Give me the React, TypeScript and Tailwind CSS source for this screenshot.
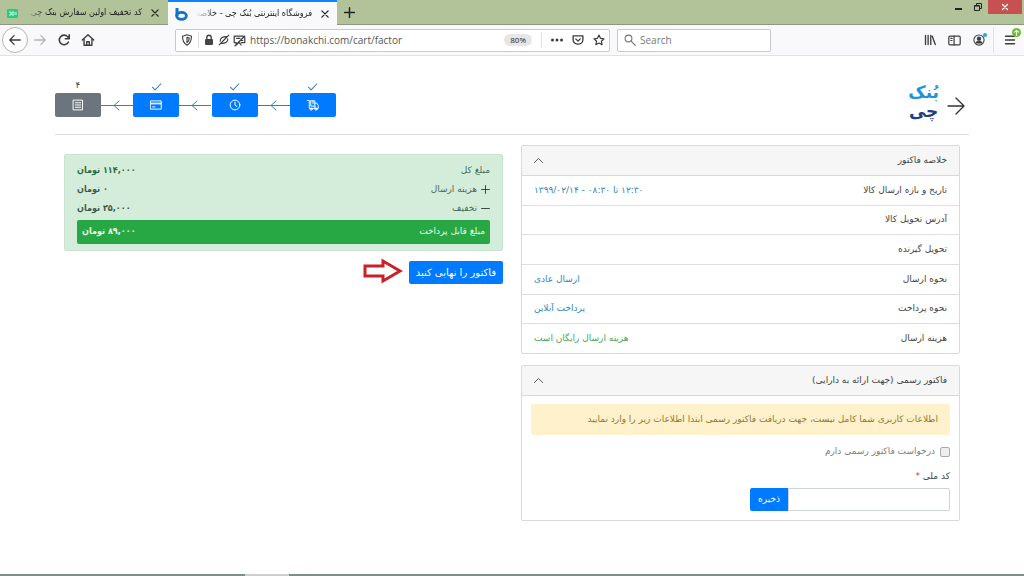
import type { ReactNode } from "react";

const stroke = {
  fill: "none",
  stroke: "currentColor",
  strokeLinecap: "round" as const,
  strokeLinejoin: "round" as const,
};

function Icon({ size, width = 1.5, children, className = "" }: { size: number; width?: number; children: ReactNode; className?: string }) {
  return (
    <svg aria-hidden="true" width={size} height={size} viewBox="0 0 16 16" strokeWidth={width} {...stroke} className={`shrink-0 ${className}`}>
      {children}
    </svg>
  );
}

function CloseGlyph() {
  return (
    <Icon size={10} width={2}>
      <path d="M3 3l10 10M13 3L3 13" />
    </Icon>
  );
}

function TabStrip() {
  return (
    <div className="flex h-[25px] items-stretch border-b border-[#8f9784] bg-[#b3c399] font-['DejaVu_Sans_Condensed','DejaVu_Sans',sans-serif] text-[#222]">
      <div className="flex w-[168px] items-center gap-2 pl-[7px] pr-2 pt-[2px]">
        <svg aria-hidden="true" width="11" height="9" viewBox="0 0 11 9" className="shrink-0">
          <rect width="11" height="9" rx="1" fill="#1fd07c" />
          <path d="M2 3h2v3H2M5 3h2v3H5zM9 3v3" fill="none" stroke="#c8f7df" strokeWidth="1" />
        </svg>
        <span dir="rtl" className="flex-1 whitespace-nowrap text-[9px] [mask-image:linear-gradient(to_right,transparent,black_20px)]">
          کد تخفیف اولین سفارش بنک چی.
        </span>
        <button type="button" aria-label="Close tab" className="flex"><CloseGlyph /></button>
      </div>
      <div className="-mb-px flex w-[169px] items-center gap-2 border-t-2 border-[#0a84ff] bg-[#f9f9fb] pl-[7px] pr-2">
        <svg aria-hidden="true" width="13" height="14" viewBox="0 0 13 14" className="shrink-0">
          <path d="M2 1v8" stroke="#1273c4" strokeWidth="3" fill="none" />
          <ellipse cx="6.5" cy="8.8" rx="4.9" ry="3.5" fill="none" stroke="#1273c4" strokeWidth="2.8" />
        </svg>
        <span dir="rtl" className="flex-1 whitespace-nowrap text-[9px] [mask-image:linear-gradient(to_right,transparent,black_20px)]">
          فروشگاه اینترنتی بُنک چی - خلاصه
        </span>
        <button type="button" aria-label="Close tab" className="flex"><CloseGlyph /></button>
      </div>
      <button type="button" aria-label="New tab" className="ml-[6px] flex items-center">
        <Icon size={13} width={1.8}><path d="M8 2v12M2 8h12" /></Icon>
      </button>
      <div className="ml-auto flex items-start">
        <button type="button" aria-label="Minimize" className="flex h-4 w-5 items-center justify-center">
          <svg aria-hidden="true" width="7" height="8" viewBox="0 0 7 8"><path d="M0 4h7v2H0z" fill="#222" /></svg>
        </button>
        <button type="button" aria-label="Restore" className="flex h-[14px] w-5 items-center justify-center">
          <svg aria-hidden="true" width="8" height="8" viewBox="0 0 8 8" fill="none" stroke="#222">
            <path d="M.5 2.5h5v5h-5zM.5 3h5M2.5 2V.5h5v5H6" />
          </svg>
        </button>
        <button type="button" aria-label="Close window" className="mr-[2px] flex h-[14px] w-[34px] items-center justify-center bg-[#c75050] text-white">
          <Icon size={8} width={2.4}><path d="M3 3l10 10M13 3L3 13" /></Icon>
        </button>
      </div>
    </div>
  );
}

function Toolbar() {
  return (
    <div className="flex h-[31px] items-center border-b border-[#e2e2e4] bg-[#f9f9fb] pl-[2px] pr-2 text-[#3d3d3f]">
      <button type="button" aria-label="Back" className="flex h-[26px] w-[26px] items-center justify-center rounded-full border border-[#b5b5b7] bg-white">
        <Icon size={14}><path d="M14 8H2.500M7 3L2 8l5 5" /></Icon>
      </button>
      <button type="button" aria-label="Forward" className="ml-[5px] flex text-[#b4b4b6]">
        <Icon size={14}><path d="M2 8h11.500M9 3l5 5-5 5" /></Icon>
      </button>
      <button type="button" aria-label="Reload" className="ml-[10px] flex">
        <Icon size={14} width={1.8}><path d="M13 10.500A5.500 5.500 0 1 1 12 4l1.500 1.800M14 2v4.500H9.500" /></Icon>
      </button>
      <button type="button" aria-label="Home" className="ml-[10px] flex">
        <Icon size={14} width={1.6}><path d="M1.500 8L8 2l6.500 6M3.500 7v7h9V7M6.500 14v-4h3v4" /></Icon>
      </button>
      <div className="ml-[80px] flex h-[23px] min-w-0 flex-1 items-center rounded-[2px] border border-[#c9c9cb] bg-white pl-[5px] pr-1">
        <Icon size={12}><path d="M8 1l6 2c0 6-1.500 9.500-6 12C3.500 12.500 2 9 2 3zM8 4.500v7c2-1.500 3-3.500 3-6z" /></Icon>
        <span className="mx-[5px] h-4 w-px bg-[#dcdcde]" />
        <svg aria-hidden="true" width="10" height="12" viewBox="0 0 10 12" className="shrink-0">
          <rect x="1" y="5" width="8" height="6" rx="1" fill="#444" />
          <path d="M2.800 5V3.500a2.200 2.200 0 0 1 4.400 0V5" fill="none" stroke="#444" strokeWidth="1.400" />
        </svg>
        <Icon size={12} className="ml-1"><path d="M1.500 14.500l13-13M3 9.500C2.500 6 6 3 12 3.500M13 6.500c.5 3.500-3 6.500-9 6M6 10l5-5" /></Icon>
        <Icon size={13} className="ml-[3px]"><path d="M1.500 2.500h11M1.500 2.500v8H4v3l3-3M14.500 4.500v6H10M2.500 14.500l12-12M4.500 5.500h4M10 8h2M10 13.500L7.500 10.500" /></Icon>
        <input aria-label="Address" defaultValue="https://bonakchi.com/cart/factor" className="ml-1 h-4 min-w-0 flex-1 bg-transparent font-['Open_Sans',sans-serif] text-[10px] leading-4 text-[#555] outline-none" />
        <span className="rounded-full bg-[#e6e6e8] px-[6px] py-px font-['Open_Sans',sans-serif] text-[8px] leading-[10px] text-[#222]">80%</span>
        <span className="mx-[9px] h-4 w-px bg-[#e3e3e5]" />
        <button type="button" aria-label="Page actions" className="flex">
          <svg aria-hidden="true" width="12" height="4" viewBox="0 0 12 4" fill="#3d3d3f"><circle cx="1.500" cy="2" r="1.500" /><circle cx="6" cy="2" r="1.500" /><circle cx="10.500" cy="2" r="1.500" /></svg>
        </button>
        <button type="button" aria-label="Save to Pocket" className="ml-[9px] flex">
          <Icon size={12} width={1.8}><path d="M1.500 2.500h13v5c0 8-13 8-13 0zM5 6.500l3 3 3-3" /></Icon>
        </button>
        <button type="button" aria-label="Bookmark" className="ml-[9px] flex">
          <Icon size={12} width={1.6}><path d="M8 1.500l2 4.300 4.700.6-3.500 3.200.9 4.700L8 12l-4.100 2.300.9-4.700L1.300 6.400 6 5.800z" /></Icon>
        </button>
      </div>
      <div className="ml-[7px] flex h-[23px] w-[154px] min-w-0 items-center gap-1 rounded-[2px] border border-[#c9c9cb] bg-white px-[6px]">
        <Icon size={12} className="text-[#777]"><circle cx="6" cy="6" r="4.500" /><path d="M9.500 9.500L15 15" /></Icon>
        <input aria-label="Search" placeholder="Search" className="h-4 min-w-0 flex-1 bg-transparent font-['Open_Sans',sans-serif] text-[10px] leading-4 outline-none placeholder:text-[#777]" />
      </div>
      <div className="ml-[153px] flex items-center gap-3">
        <button type="button" aria-label="Library" className="flex">
          <Icon size={12} width={1.8}><path d="M2 2v12M5.500 2v12M9 2v12M11 3l4 11" /></Icon>
        </button>
        <button type="button" aria-label="Sidebars" className="flex">
          <Icon size={13} width={1.5}><rect x="1" y="2.500" width="14" height="11" rx="1.500" /><path d="M7.500 2.500v11M3.500 5.500h1.500M3.500 8h1.500" /></Icon>
        </button>
        <button type="button" aria-label="Account" className="relative flex">
          <Icon size={12} width={1.4}><circle cx="8" cy="8" r="6.800" /><circle cx="8" cy="6.200" r="2.200" fill="currentColor" /><path d="M4 12c1-3 7-3 8 0z" fill="currentColor" /></Icon>
          <span className="absolute -right-[2px] -top-[1px] h-1 w-1 rounded-full bg-[#20a8ee]" />
        </button>
      </div>
      <div className="ml-2 flex h-[26px] items-center border-l border-[#e2e2e4] pl-[10px]">
        <button type="button" aria-label="Open menu" className="relative flex">
          <Icon size={12} width={1.8}><path d="M2 3h12M2 8h12M2 13h12" /></Icon>
          <span className="absolute -right-[5px] -top-[6px] flex h-[9px] w-[9px] items-center justify-center rounded-full bg-[#6cc02f] text-white">
            <Icon size={7} width={2.4}><path d="M8 14V3M3.500 7L8 3l4.500 4" /></Icon>
          </span>
        </button>
      </div>
    </div>
  );
}

const steps: { name: string; done: boolean; icon: ReactNode }[] = [
  { name: "فاکتور", done: false, icon: <path d="M2 1.500h12v13H2zM4.500 5h7M4.500 8h7M4.500 11h7" /> },
  { name: "پرداخت", done: true, icon: <path d="M1 2.500h14v11H1zM1 5.500h14M1 6.500h14M3.500 10.500h3" /> },
  { name: "زمان", done: true, icon: <><circle cx="8" cy="8" r="6.500" /><path d="M8 4v4l2.500 2" /></> },
  { name: "ارسال", done: true, icon: <><path d="M.500 2H3v10.500h12V8.500L13 5.500h-2.500M5 2.500h5.500v10M5 2.500v7h5.500M8 2.500v4" /><circle cx="5.500" cy="13.500" r="1.400" /><circle cx="12" cy="13.500" r="1.400" /></> },
];

function Connector() {
  return (
    <li aria-hidden="true" className="flex h-6 flex-1 items-center text-[#2f80bd]">
      <svg width="32" height="13" viewBox="0 0 32 13" {...stroke}>
        <path d="M0 6.500h32M18 2l-5 4.500 5 4.500" />
      </svg>
    </li>
  );
}

function Steps() {
  return (
    <ol dir="ltr" className="flex w-[281px] items-end">
      {steps.flatMap((step, i) => [
        i > 0 ? <Connector key={`${step.name}-link`} /> : null,
        <li key={step.name} className="flex w-[46px] flex-col items-center">
          <span className="flex h-[14px] items-center text-[9px] text-[#444]">
            {step.done ? (
              <Icon size={11} width={1.5} className="text-[#2f80bd]"><path d="M2 9l4 4 8.500-9" /></Icon>
            ) : (
              "۴"
            )}
          </span>
          <button
            type="button"
            aria-label={step.name}
            className={`flex h-6 w-full items-center justify-center rounded-[2px] text-white ${step.done ? "bg-[#007bff]" : "bg-[#6c757d]"}`}
          >
            <Icon size={12} width={1.3}>{step.icon}</Icon>
          </button>
        </li>,
      ])}
    </ol>
  );
}

const details = [
  { label: "تاریخ و بازه ارسال کالا", value: "۱۲:۳۰ تا ۰۸:۳۰ - ۱۳۹۹/۰۲/۱۴", tone: "text-[#2f86bf]" },
  { label: "آدرس تحویل کالا", value: "", tone: "" },
  { label: "تحویل گیرنده", value: "", tone: "" },
  { label: "نحوه ارسال", value: "ارسال عادی", tone: "text-[#2f86bf]" },
  { label: "نحوه پرداخت", value: "پرداخت آنلاین", tone: "text-[#2f86bf]" },
  { label: "هزینه ارسال", value: "هزینه ارسال رایگان است", tone: "text-[#46a65a]" },
];

function CardHeader({ title }: { title: string }) {
  return (
    <button type="button" aria-expanded="true" className="flex h-[30px] w-full items-center justify-between border-b border-[#d9d9d9] bg-[#f6f6f6] pl-[11px] pr-3">
      <span>{title}</span>
      <Icon size={11} width={1.3}><path d="M2 11l6-6 6 6" /></Icon>
    </button>
  );
}

const totals = [
  { sign: "", label: "مبلغ کل", value: "۱۱۴,۰۰۰ تومان", tone: "text-[#2c6b3e]" },
  { sign: "plus", label: "هزینه ارسال", value: "۰ تومان", tone: "text-[#3f5a48]" },
  { sign: "minus", label: "تخفیف", value: "۲۵,۰۰۰ تومان", tone: "text-[#3f5a48]" },
];

export default function App() {
  return (
    <div className="flex min-h-screen flex-col bg-white font-['DejaVu_Sans',sans-serif] text-[9px] text-[#444]">
      <TabStrip />
      <Toolbar />
      <main dir="rtl" className="flex-1 px-[55px]">
        <header className="flex items-end justify-between border-b border-[#dcdcdc] pb-[17px] pt-[23px]">
          <div className="flex items-center gap-2 pr-1">
            <button type="button" aria-label="بازگشت" className="mt-3 flex text-[#333]">
              <svg aria-hidden="true" width="18" height="18" viewBox="0 0 18 18" strokeWidth="1.300" {...stroke}><path d="M1 9h16M9 1l8 8-8 8" /></svg>
            </button>
            <a href="#" className="-mb-1 flex flex-col items-center text-[17px] font-bold leading-[19px]">
              <span className="text-[#1c93dd]">بُنک</span>
              <span className="text-[#1d3f86]">چی</span>
            </a>
          </div>
          <Steps />
        </header>

        <div className="grid grid-cols-2 gap-[18px] px-[9px] pt-[10px]">
          <div className="flex flex-col gap-[11px]">
            <section className="overflow-hidden rounded-[2px] border border-[#d9d9d9]">
              <CardHeader title="خلاصه فاکتور" />
              <dl className="flex h-[177px] flex-col divide-y divide-[#dedede]">
                {details.map((row) => (
                  <div key={row.label} className="flex flex-1 items-center justify-between px-3">
                    <dt>{row.label}</dt>
                    <dd className={row.tone}>{row.value}</dd>
                  </div>
                ))}
              </dl>
            </section>

            <section className="overflow-hidden rounded-[2px] border border-[#d9d9d9]">
              <CardHeader title="فاکتور رسمی (جهت ارائه به دارایی)" />
              <form className="flex flex-col px-[9px] pb-[9px] pt-2" onSubmit={(e) => e.preventDefault()}>
                <p className="flex h-[31px] items-center whitespace-nowrap rounded-[2px] bg-[#fff1cc] px-3 text-[#8f7a30]">
                  اطلاعات کاربری شما کامل نیست، جهت دریافت فاکتور رسمی ابتدا اطلاعات زیر را وارد نمایید
                </p>
                <label className="mt-[9px] flex h-4 items-center gap-[5px] text-[#808080]">
                  <input type="checkbox" className="h-[10px] w-[10px] appearance-none rounded-[2px] border border-[#aaa] bg-[#eee]" />
                  درخواست فاکتور رسمی دارم
                </label>
                <label htmlFor="national-id" className="mt-2 h-4 leading-4">
                  کد ملی <span className="text-[#dc3545]">*</span>
                </label>
                <div className="mt-1 flex h-[23px]">
                  <input id="national-id" className="w-[162px] rounded-r-[2px] border border-[#ced4da] px-2 outline-none" />
                  <button type="submit" className="rounded-l-[2px] bg-[#007bff] px-2 text-white">ذخیره</button>
                </div>
              </form>
            </section>
          </div>

          <div className="pt-[9px]">
            <section className="rounded-[2px] border border-[#c8e4d0] bg-[#d4edda] px-3 pb-[6px] pt-[6px]">
              <dl>
                {totals.map((row) => (
                  <div key={row.label} className={`flex h-[19px] items-center justify-between ${row.tone}`}>
                    <dt className="flex items-center gap-1 text-[#4f6b57]">
                      {row.sign !== "" && (
                        <Icon size={9} width={1.6} className="text-[#333]"><path d={row.sign === "plus" ? "M8 1v14M1 8h14" : "M1 8h14"} /></Icon>
                      )}
                      {row.label}
                    </dt>
                    <dd className="font-['DejaVu_Sans_Condensed','DejaVu_Sans',sans-serif] font-bold">{row.value}</dd>
                  </div>
                ))}
                <div className="mt-[2px] flex h-6 items-center justify-between rounded-[2px] bg-[#28a745] px-[5px] text-[#e9ffe9]">
                  <dt>مبلغ قابل پرداخت</dt>
                  <dd className="font-['DejaVu_Sans_Condensed','DejaVu_Sans',sans-serif] font-bold">۸۹,۰۰۰ تومان</dd>
                </div>
              </dl>
            </section>
            <div className="mt-[6px] flex items-center gap-[6px]">
              <button type="button" className="mt-1 h-[23px] rounded-[2px] bg-[#007bff] px-[7px] text-[10px] text-white">فاکتور را نهایی کنید</button>
              <svg aria-hidden="true" width="40" height="26" viewBox="0 0 40 26" fill="#fff" stroke="#c9202b" strokeWidth="3" strokeLinejoin="miter">
                <path d="M2 8h18V3L37 13 20 23v-5H2z" />
              </svg>
            </div>
          </div>
        </div>
      </main>
      <div className="flex h-[2px]">
        <span className="flex-[245] bg-[#7d8d87]" />
        <span className="flex-[44] bg-[#cfcfcf]" />
        <span className="flex-[735] bg-[#7d8d87]" />
      </div>
    </div>
  );
}
